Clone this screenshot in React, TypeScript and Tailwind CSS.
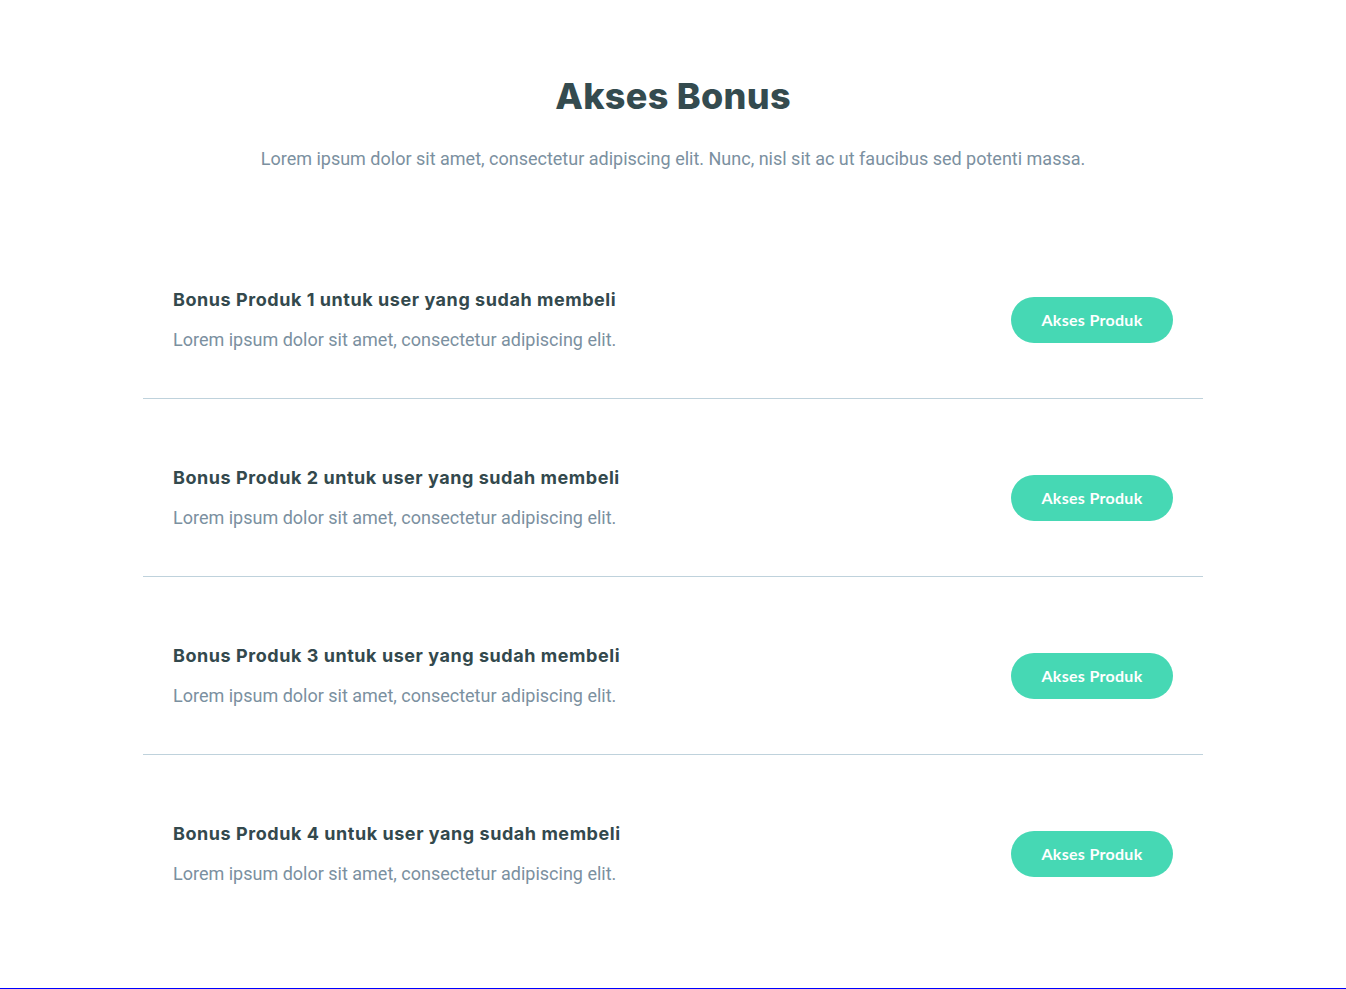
const BONUSES = [1, 2, 3, 4];

function BonusRow({ n, last }: { n: number; last: boolean }) {
  return (
    <div
      className={`flex items-center justify-between px-[30px] pt-[67px] pb-[46px] ${
        last ? "" : "border-b border-[#bfd2dc]"
      }`}
    >
      <div className="flex flex-col">
        <h3 className="font-['Inter',sans-serif] text-[18px] font-bold leading-[24px] tracking-[0.55px] text-[#33494d]">
          Bonus Produk {n} untuk user yang sudah membeli
        </h3>
        <p className="mt-[16px] font-['Roboto',sans-serif] text-[18px] leading-[24px] text-[#7b90a0]">
          Lorem ipsum dolor sit amet, consectetur adipiscing elit.
        </p>
      </div>
      <button className="h-[46px] w-[162px] rounded-full bg-[#46d8b4] font-['Lato',sans-serif] text-[16px] font-bold tracking-[0.3px] text-white">
        Akses Produk
      </button>
    </div>
  );
}

export default function App() {
  return (
    <div className="min-h-[989px] w-full border-b border-[#0000ff] bg-white">
      <div className="mx-auto w-[1060px] pt-[74px] pb-[40px]">
        <h1 className="text-center font-['Inter',sans-serif] text-[36px] font-extrabold leading-[44px] tracking-[0.3px] text-[#344b4f]">
          Akses Bonus
        </h1>
        <p className="mt-[29px] text-center font-['Roboto',sans-serif] text-[18px] leading-[24px] text-[#7b90a0]">
          Lorem ipsum dolor sit amet, consectetur adipiscing elit. Nunc, nisl sit ac ut faucibus sed potenti massa.
        </p>
        <div className="mt-[50px]">
          {BONUSES.map((n, i) => (
            <BonusRow key={n} n={n} last={i === BONUSES.length - 1} />
          ))}
        </div>
      </div>
    </div>
  );
}
